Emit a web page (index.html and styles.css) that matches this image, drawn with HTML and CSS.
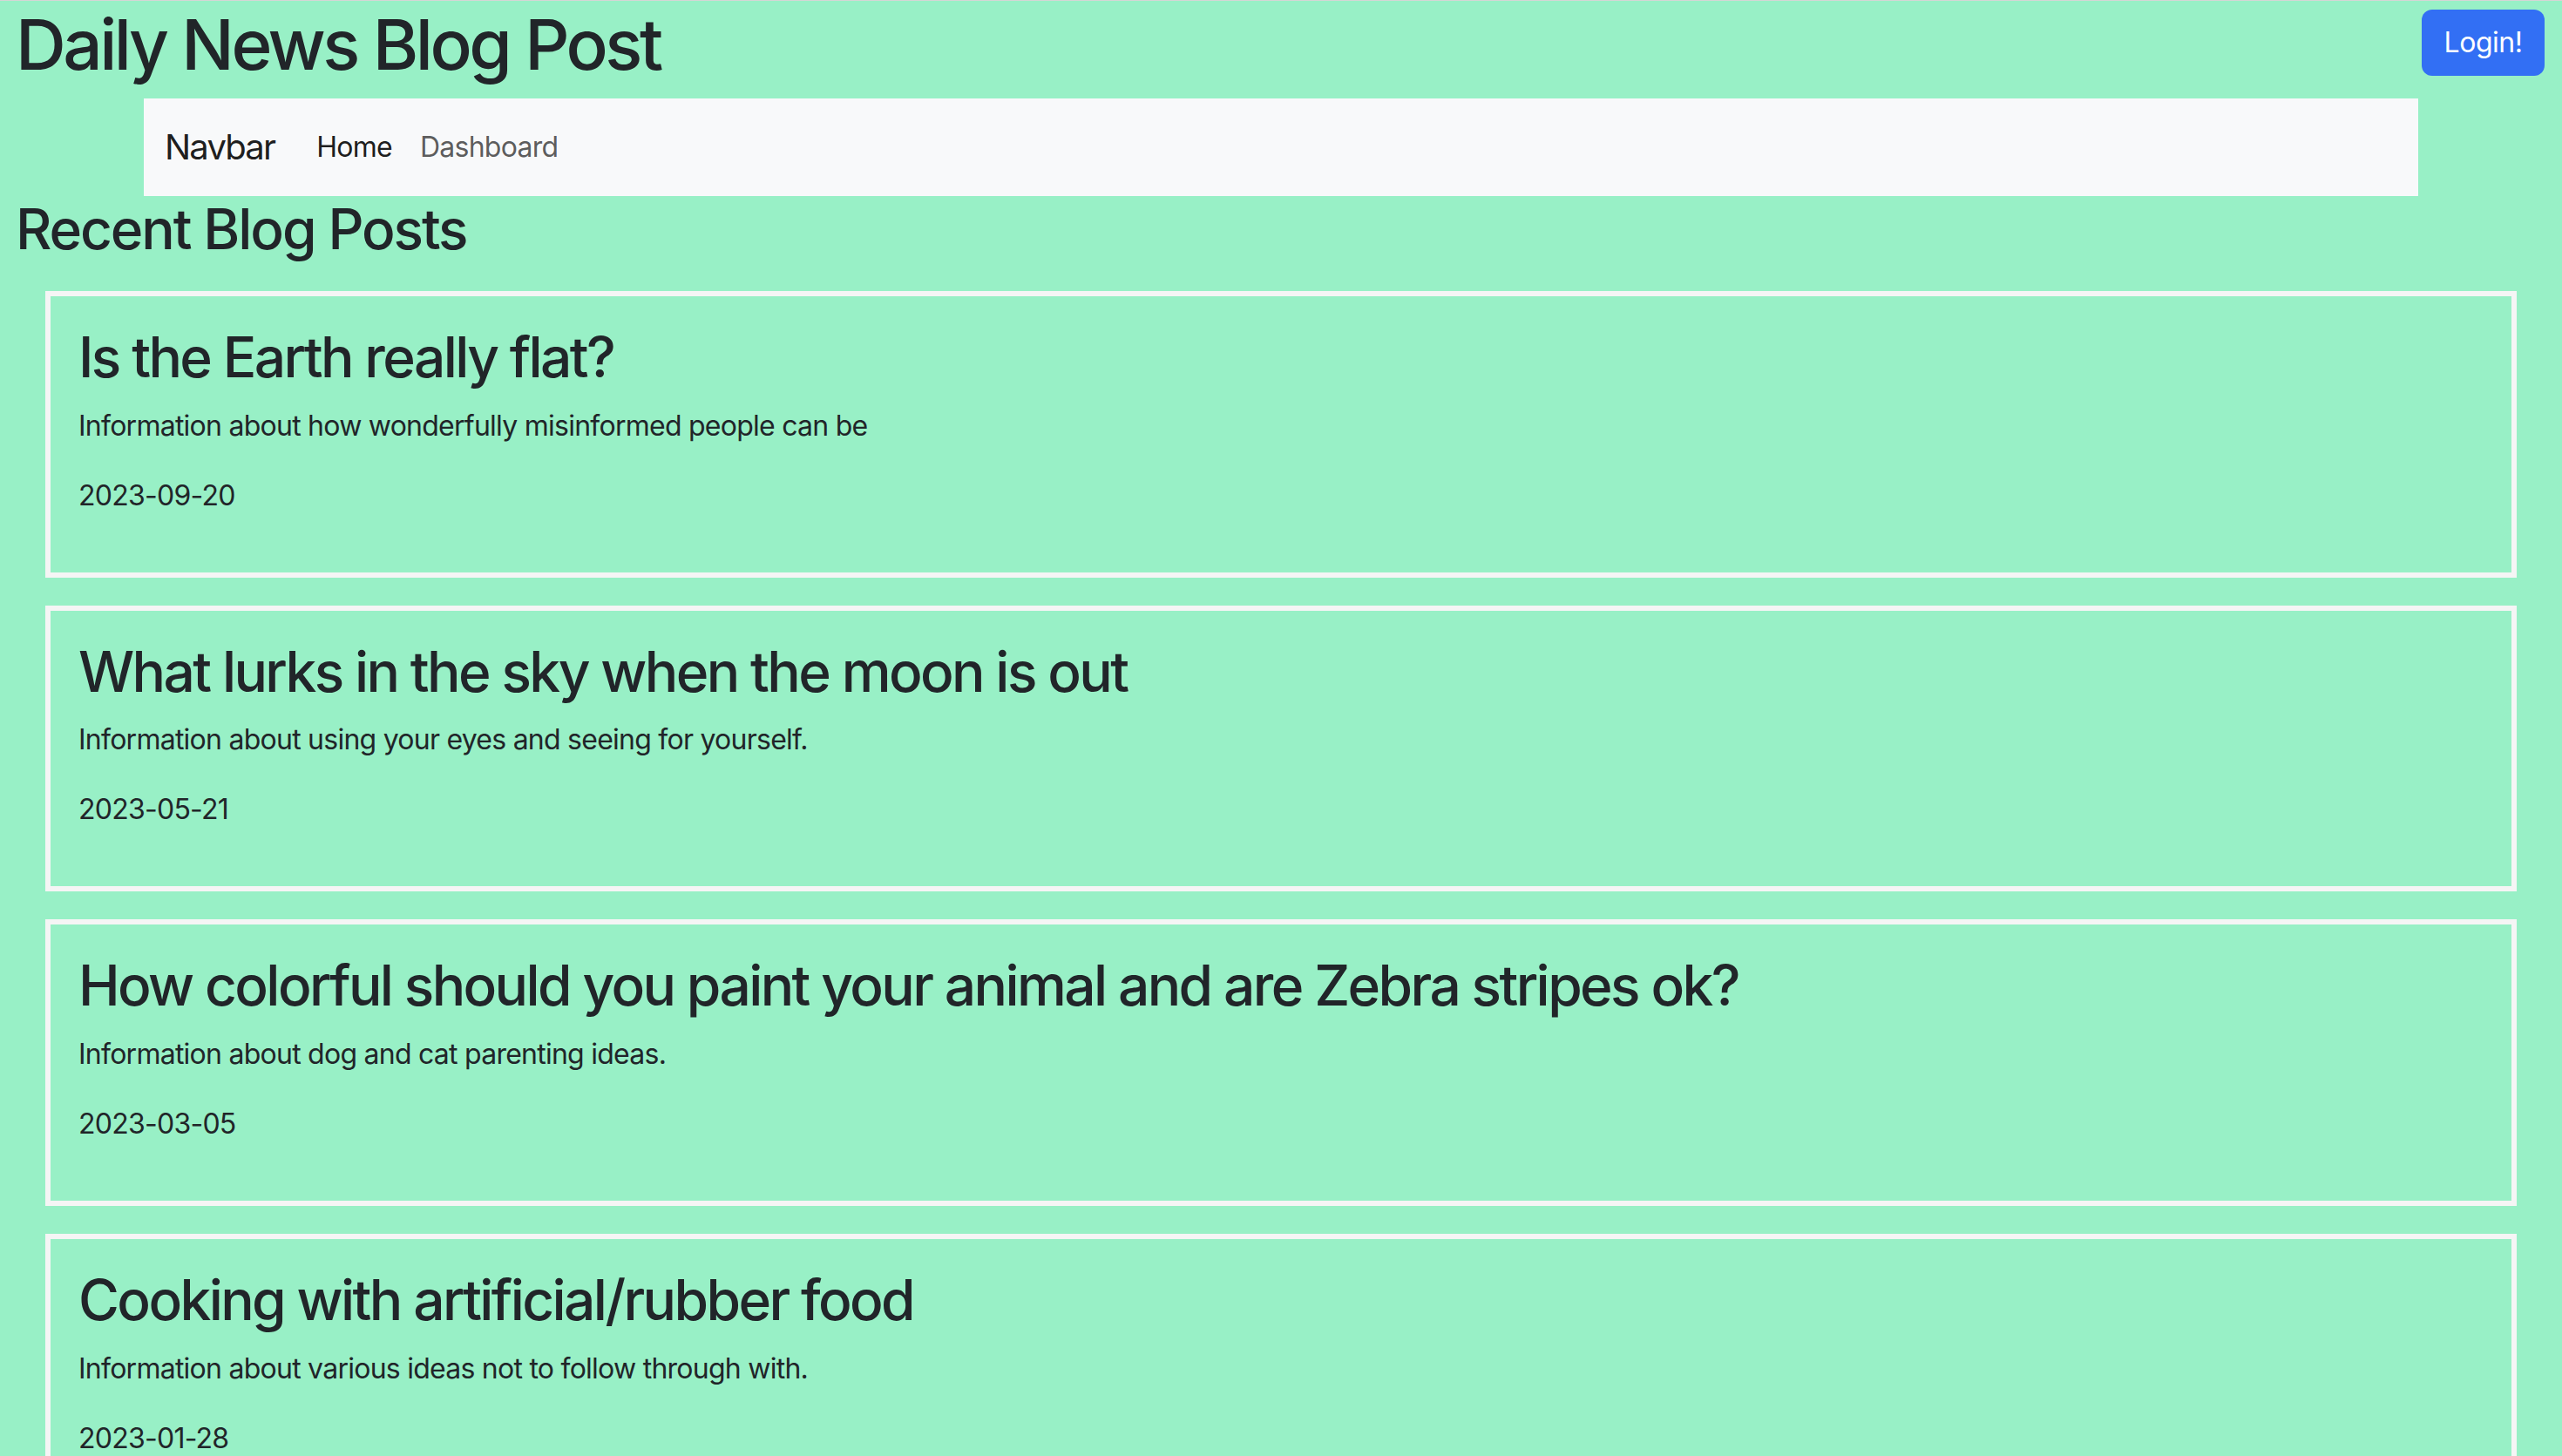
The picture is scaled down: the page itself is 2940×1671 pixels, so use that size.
FILE: index.html
```html
<!DOCTYPE html>
<html lang="en">
<head>
<meta charset="utf-8">
<title>Daily News Blog Post</title>
<link rel="stylesheet" href="styles.css">
</head>
<body>
  <header class="site-header">
    <h1 class="site-title">Daily News Blog Post</h1>
    <button class="btn-login" type="button">Login!</button>
  </header>
  <nav class="navbar">
    <a class="navbar-brand" href="#">Navbar</a>
    <ul class="nav-list">
      <li><a class="nav-link active" href="#">Home</a></li>
      <li><a class="nav-link" href="#">Dashboard</a></li>
    </ul>
  </nav>
  <main>
    <h2 class="section-title">Recent Blog Posts</h2>
    <div class="posts">
      <article class="post-card">
        <h2 class="post-title">Is the Earth really flat?</h2>
        <p class="post-desc">Information about how wonderfully misinformed people can be</p>
        <p class="post-date">2023-09-20</p>
      </article>
      <article class="post-card">
        <h2 class="post-title">What lurks in the sky when the moon is out</h2>
        <p class="post-desc">Information about using your eyes and seeing for yourself.</p>
        <p class="post-date">2023-05-21</p>
      </article>
      <article class="post-card">
        <h2 class="post-title">How colorful should you paint your animal and are Zebra stripes ok?</h2>
        <p class="post-desc">Information about dog and cat parenting ideas.</p>
        <p class="post-date">2023-03-05</p>
      </article>
      <article class="post-card">
        <h2 class="post-title">Cooking with artificial/rubber food</h2>
        <p class="post-desc">Information about various ideas not to follow through with.</p>
        <p class="post-date">2023-01-28</p>
      </article>
    </div>
  </main>
</body>
</html>
```

FILE: styles.css
```css
* { box-sizing: border-box; }

html, body {
  margin: 0;
  padding: 0;
}

body {
  background: #98f0c6;
  color: #212529;
  font-family: Inter, "Noto Sans", "Liberation Sans", sans-serif;
  font-size: 32px;
  line-height: 1.5;
  letter-spacing: -0.75px;
  border-top: 1px solid #d6d6d6;
}

.site-header {
  display: flex;
  justify-content: space-between;
  align-items: flex-start;
  padding: 0 20px 0 18px;
}

.site-title {
  margin: 2px 0 0 0;
  font-size: 80px;
  font-weight: 500;
  line-height: 96px;
  letter-spacing: -3.5px;
}

.btn-login {
  margin-top: 10px;
  height: 76px;
  width: 141px;
  padding: 0;
  border: 0;
  border-radius: 12px;
  background: #326ff4;
  color: #fff;
  font-family: inherit;
  font-size: 32px;
  line-height: 48px;
  font-weight: 400;
  letter-spacing: -0.5px;
}

.navbar {
  display: flex;
  align-items: center;
  height: 112px;
  margin: 14px 165px 0 165px;
  padding: 0 24px;
  background: #f8f9fa;
}

.navbar-brand {
  font-size: 40px;
  line-height: 60px;
  letter-spacing: -1.8px;
  color: rgba(0, 0, 0, 0.9);
  text-decoration: none;
  margin-right: 32px;
}

.nav-list {
  display: flex;
  list-style: none;
  margin: 0;
  padding: 0;
}

.nav-link {
  display: block;
  padding: 16px 16px;
  font-size: 32px;
  line-height: 48px;
  color: rgba(0, 0, 0, 0.65);
  text-decoration: none;
}

.nav-link.active {
  color: rgba(0, 0, 0, 0.9);
}

.section-title {
  margin: 0 0 32px 18px;
  font-size: 64px;
  font-weight: 500;
  line-height: 76.8px;
  letter-spacing: -2.1px;
}

.posts {
  display: flex;
  flex-direction: column;
  gap: 32px;
  padding: 0 52px;
}

.post-card {
  border: 6px solid #f5f5f5;
  padding: 32px;
}

.post-title {
  margin: 0 0 16px 0;
  font-size: 64px;
  font-weight: 500;
  line-height: 76.8px;
  letter-spacing: -2.6px;
}

.post-desc,
.post-date {
  margin: 0 0 32px 0;
  font-size: 32px;
  line-height: 48px;
}
```
